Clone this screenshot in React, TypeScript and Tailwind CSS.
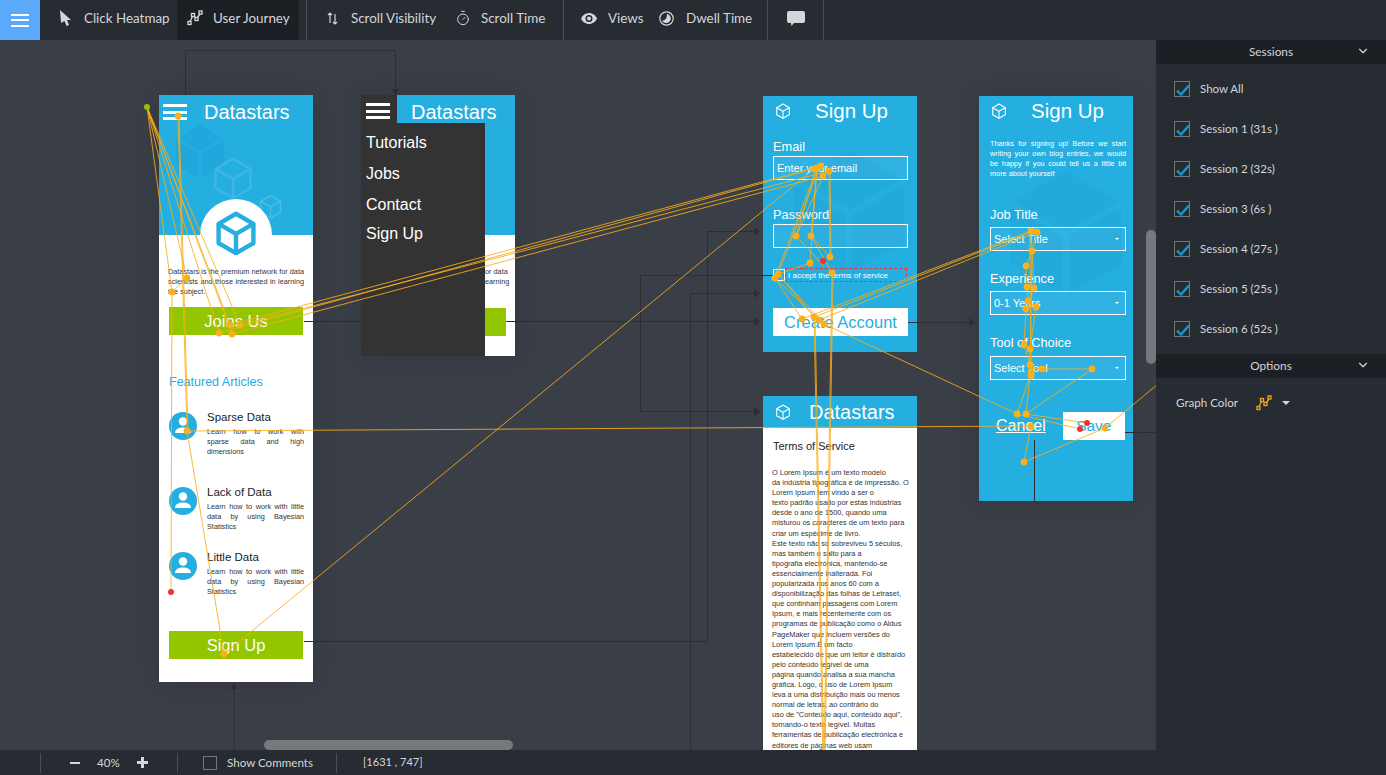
import { ReactNode } from "react";
import { ChevronDown, Timer } from "lucide-react";

const UI_FONT = "font-['Lato','Noto_Sans',sans-serif]";
const MOCK_FONT = "font-['Liberation_Sans',Arial,sans-serif]";

const SESSIONS = [
  "Show All",
  "Session 1 (31s )",
  "Session 2 (32s)",
  "Session 3 (6s )",
  "Session 4 (27s )",
  "Session 5 (25s )",
  "Session 6 (52s )",
];

const ARTICLES = [
  { title: "Sparse Data", body: "Learn how to work with sparse data and high dimensions", h: "h-[75px]" },
  { title: "Lack of Data", body: "Learn how to work with little data by using Bayesian Statistics", h: "h-[65px]" },
  { title: "Little Data", body: "Learn how to work with little data by using Bayesian Statistics", h: "h-[65px]" },
];

const TERMS = [
  "O Lorem Ipsum é um texto modelo",
  "da indústria tipográfica e de impressão. O",
  "Lorem Ipsum tem vindo a ser o",
  "texto padrão usado por estas indústrias",
  "desde o ano de 1500, quando uma",
  "misturou os caracteres de um texto para",
  "criar um espécime de livro.",
  "Este texto não só sobreviveu 5 séculos,",
  "mas também o salto para a",
  "tipografia electrónica, mantendo-se",
  "essencialmente inalterada. Foi",
  "popularizada nos anos 60 com a",
  "disponibilização das folhas de Letraset,",
  "que continham passagens com Lorem",
  "Ipsum, e mais recentemente com os",
  "programas de publicação como o Aldus",
  "PageMaker que incluem versões do",
  "Lorem Ipsum.É um facto",
  "estabelecido de que um leitor é distraído",
  "pelo conteúdo legível de uma",
  "página quando analisa a sua mancha",
  "gráfica. Logo, o uso de Lorem Ipsum",
  "leva a uma distribuição mais ou menos",
  "normal de letras, ao contrário do",
  "uso de \"Conteúdo aqui, conteúdo aqui\",",
  "tornando-o texto legível. Muitas",
  "ferramentas de publicação electrónica e",
  "editores de páginas web usam",
];

// journey polylines, in page coordinates
const JOURNEY: number[][] = [
  [147, 107, 172, 292], [147, 107, 187, 278], [147, 107, 219, 333], [147, 107, 230, 325], [147, 107, 232, 334], [147, 107, 240, 325],
  [187, 278, 172, 292], [172, 292, 171, 592], [178, 116, 187, 431], [179, 116, 188, 431], [187, 431, 224, 654], [187, 431, 1031, 426],
  [219, 333, 817, 168], [230, 325, 821, 166], [232, 334, 823, 176], [240, 325, 829, 171], [224, 654, 814, 169],
  [817, 168, 796, 236], [823, 176, 796, 236], [817, 168, 811, 236], [817, 168, 810, 263], [829, 171, 830, 257], [830, 171, 831, 257],
  [820, 166, 778, 274], [817, 168, 775, 278], [796, 236, 823, 265], [811, 236, 832, 273], [811, 236, 830, 257], [810, 263, 778, 274],
  [775, 278, 802, 319], [778, 274, 814, 317], [775, 278, 819, 320], [778, 274, 824, 324],
  [814, 317, 823, 760], [815, 317, 824, 760], [832, 273, 824, 760], [833, 273, 825, 760],
  [802, 319, 1031, 231], [814, 317, 1031, 232], [819, 320, 1037, 232], [824, 324, 1017, 414],
  [1031, 231, 1032, 251], [1037, 232, 1032, 251], [1032, 251, 1026, 266], [1026, 266, 1027, 287], [1032, 251, 1034, 288],
  [1027, 287, 1028, 301], [1034, 288, 1026, 309], [1028, 301, 1036, 307], [1026, 309, 1024, 345], [1036, 307, 1030, 349],
  [1032, 251, 1030, 372], [1030, 235, 1031, 376], [1024, 345, 1030, 365], [1030, 349, 1031, 372], [1042, 369, 1092, 369], [1031, 368, 1042, 369],
  [1031, 374, 1017, 414], [1092, 369, 1026, 414], [1030, 376, 1026, 414], [1026, 414, 1087, 423], [1017, 414, 1080, 429],
  [1031, 426, 1024, 462], [1024, 462, 1105, 428], [1105, 428, 1158, 384],
];

const DOTS = [
  [178, 116], [187, 278], [172, 292], [219, 333], [232, 334], [230, 325], [240, 325], [187, 431], [224, 654],
  [821, 166], [817, 168], [814, 169], [823, 176], [829, 171], [796, 236], [811, 236], [830, 257], [810, 263], [832, 273], [778, 274], [775, 278],
  [802, 319], [814, 317], [819, 320], [824, 324],
  [1031, 231], [1037, 232], [1032, 251], [1026, 266], [1027, 287], [1034, 288], [1028, 301], [1026, 309], [1036, 307],
  [1024, 345], [1030, 349], [1030, 365], [1042, 369], [1092, 369], [1031, 372], [1031, 376], [1017, 414], [1026, 414], [1031, 426], [1024, 462], [1105, 428],
];

function JourneyIcon({ color = "#d8dadd" }: { color?: string }) {
  return (
    <svg width="16" height="16" viewBox="0 0 16 16" fill="none" stroke={color} strokeWidth="1.3">
      <rect x="1" y="11.5" width="3" height="3" />
      <rect x="4.5" y="3.5" width="3" height="3" />
      <rect x="8" y="7.5" width="3" height="3" />
      <rect x="12" y="1" width="3" height="3" />
      <path d="M3 11.5 5.500 6.500M7 6.500 9 7.500M10.500 7.500 13 4" />
    </svg>
  );
}

function Cube({ size, stroke = "#fff", sw = 1.6, fill = "none", className = "" }: { size: number; stroke?: string; sw?: number; fill?: string; className?: string }) {
  return (
    <svg width={size} height={size} viewBox="0 0 24 24" fill="none" stroke={stroke} strokeWidth={sw} strokeLinejoin="round" className={className}>
      <path d="M12 1.5 21.5 7v10.5L12 23 2.500 17.500V7z" fill={fill} />
      <path d="M2.500 7 12 12.500 21.500 7M12 12.500V23" />
    </svg>
  );
}

function Avatar() {
  return (
    <svg width="28" height="28" viewBox="0 0 28 28" className="shrink-0">
      <circle cx="14" cy="14" r="14" fill="#25aee0" />
      <circle cx="14" cy="9.5" r="4.2" fill="#fff" />
      <path d="M6 21c0-4 4-5.600 8-5.600s8 1.600 8 5.600z" fill="#fff" />
    </svg>
  );
}

function Burger({ className = "" }: { className?: string }) {
  return (
    <div className={`flex flex-col justify-between w-6 h-[16px] ${className}`}>
      <div className="h-[3px] bg-white" />
      <div className="h-[3px] bg-white" />
      <div className="h-[3px] bg-white" />
    </div>
  );
}

function ToolItem({ icon, label, w, gap, pl, active }: { icon: ReactNode; label: string; w: string; gap: string; pl: string; active?: boolean }) {
  return (
    <div className={`flex items-center h-10 pb-[4px] text-[13.4px] text-[#d4d6d9] ${w} ${gap} ${pl} ${active ? "bg-[#1c2025]" : ""}`}>
      {icon}
      <span className="whitespace-nowrap">{label}</span>
    </div>
  );
}

function Field({ label, value, select, gap = "mt-[2px]", className = "" }: { label: string; value?: string; select?: boolean; gap?: string; className?: string }) {
  return (
    <div className={className}>
      <div className="text-[12.800px] leading-[14px] text-white">{label}</div>
      <div className={`flex items-center justify-between h-[24px] border border-white bg-white/5 px-[3px] text-[11px] text-white ${gap}`}>
        <span>{value}</span>
        {select && <span className="mr-[3px] border-x-[2px] border-t-[2px] border-x-transparent border-t-white" />}
      </div>
    </div>
  );
}

function Connectors() {
  const stroke = "#2c2e32";
  const arrows = [
    [760, 231], [760, 293], [760, 321], [760, 411], [975, 322],
  ];
  return (
    <svg className="absolute left-0 top-0 w-[1156px] h-[710px]" viewBox="0 40 1156 710" fill="none" stroke={stroke}>
      <path d="M185.500 95V50.500H395.500V92" />
      <path d="M304 321.500H760M908 322.500H975" />
      <path d="M304 641.500H707.500V231.500H760" />
      <path d="M763 275.500H640.500V411.500H760" />
      <path d="M690.500 750V293.500H760" />
      <path d="M234 750V688" />
      <path d="M1125 432.500H1156" />
      {arrows.map(([x, y]) => (
        <path key={`${x}-${y}`} d={`M${x - 6} ${y - 4}L${x} ${y + 0.5}L${x - 6} ${y + 5}z`} fill={stroke} stroke="none" />
      ))}
      <path d="M392 89h7l-3.500 6z" fill={stroke} stroke="none" />
      <path d="M231 689l3-6 3 6z" fill={stroke} stroke="none" />
    </svg>
  );
}

function JourneyOverlay() {
  return (
    <svg className="absolute left-0 top-0 w-[1156px] h-[710px] pointer-events-none" viewBox="0 40 1156 710">
      {/* connector stubs that sit on top of the screens */}
      <path d="M304 321.500H313M506 321.500H515M304 641.500H313M908 322.500H917M763 275.500H773M1125 432.500H1133M1034.500 440V501" fill="none" stroke="#2c2e32" />
      {JOURNEY.map(([a, b, c, d], i) => (
        <line key={i} x1={a} y1={b} x2={c} y2={d} stroke="#f9ae19" strokeWidth="1" strokeOpacity="0.85" />
      ))}
      {DOTS.map(([x, y], i) => (
        <circle key={i} cx={x} cy={y} r="3.400" fill="#fbb01a" />
      ))}
      <circle cx="147" cy="107" r="3" fill="#8fc400" />
      <circle cx="171" cy="592" r="3" fill="#f0303a" />
      <circle cx="823" cy="261" r="3" fill="#f0303a" />
      <circle cx="1087" cy="423" r="3" fill="#f0303a" />
      <circle cx="1080" cy="429" r="3" fill="#f0303a" />
    </svg>
  );
}

function HomeScreen() {
  return (
    <div className={`absolute left-[159px] top-[55px] w-[154px] h-[587px] bg-white shadow-[0_0_24px_rgba(0,0,0,0.12)] ${MOCK_FONT}`}>
      <div className="relative h-[140px] bg-[#25aee0] overflow-hidden">
        <div className="flex items-center h-[34px] pl-[4px]">
          <Burger />
          <span className="ml-[17px] text-[20px] text-white">Datastars</span>
        </div>
        <Cube size={64} stroke="#25aee0" sw={1.2} fill="#20a7db" className="absolute left-[9px] top-[24px]" />
        <Cube size={44} stroke="#3db6e3" sw={1.5} className="absolute left-[52px] top-[61px]" />
        <Cube size={25} stroke="#49bce6" sw={1.5} className="absolute left-[99px] top-[99px]" />
        <div className="absolute left-[41px] top-[104px] w-[72px] h-[72px] rounded-full bg-white" />
      </div>
      <Cube size={44} stroke="#25aee0" sw={2.4} className="absolute left-[55px] top-[116px]" />
      <p className="mx-[9px] mt-[32px] text-[7.300px] leading-[10px] text-justify text-[#333]">
        Datastars is the premium network for data scientists and those interested in learning the subject.
      </p>
      <div className="mx-[10px] mt-[10px] h-[28px] flex items-center justify-center bg-[#94c600] text-[16.500px] text-white">Joins Us</div>
      <div className="ml-[10px] mt-[40px] text-[12.500px] leading-[15px] text-[#25aee0]">Featured Articles</div>
      <div className="mt-[20px] ml-[10px] mr-[9px]">
        {ARTICLES.map((a) => (
          <div key={a.title} className={`flex gap-[10px] ${a.h}`}>
            <div className="pt-[2px]"><Avatar /></div>
            <div className="flex-1">
              <div className="text-[11.500px] leading-[14px] text-[#222]">{a.title}</div>
              <p className="mt-[3px] text-[7.300px] leading-[10px] text-justify text-[#333]">{a.body}</p>
            </div>
          </div>
        ))}
      </div>
      <div className="mx-[10px] mt-[16px] h-[28px] flex items-center justify-center bg-[#94c600] text-[16.500px] text-white">Sign Up</div>
    </div>
  );
}

function MenuScreen() {
  return (
    <div className={`absolute left-[361px] top-[55px] w-[154px] h-[261px] bg-white shadow-[0_0_24px_rgba(0,0,0,0.12)] ${MOCK_FONT}`}>
      <div className="h-[140px] bg-[#25aee0] pl-[50px] pt-[3px] text-[20px] leading-[28px] text-white">Datastars</div>
      <p className="absolute left-[124px] top-[172px] text-[7.300px] leading-[10px] text-[#333] whitespace-nowrap">or data<br />earning</p>
      <div className="absolute left-[124px] top-[213px] w-[21px] h-[28px] bg-[#94c600]" />
      <div className="absolute left-0 top-0 w-[36px] h-[28px] bg-[#333]" />
      <div className="absolute left-0 top-[28px] bottom-0 w-[124px] bg-[#333] pl-[5px] pt-[9px] text-[16px] text-white">
        <div className="leading-[22px] mb-[9px]">Tutorials</div>
        <div className="leading-[22px] mb-[9px]">Jobs</div>
        <div className="leading-[22px] mb-[7px]">Contact</div>
        <div className="leading-[22px]">Sign Up</div>
      </div>
      <Burger className="absolute left-[5px] top-[8px]" />
    </div>
  );
}

function SignUpScreen() {
  return (
    <div className={`absolute left-[763px] top-[56px] w-[154px] h-[256px] bg-[#25aee0] overflow-hidden ${MOCK_FONT}`}>
      <Cube size={148} stroke="#25aee0" sw={1.1} fill="#22aadd" className="absolute left-[12px] top-[40px]" />
      <div className="relative">
        <div className="flex items-center h-[30px] pl-[12px]">
          <Cube size={16} />
          <span className="ml-[24px] text-[20.500px] text-white">Sign Up</span>
        </div>
        <div className="ml-[10px] mr-[9px]">
          <Field label="Email" value="Enter your email" className="mt-[14px]" />
          <Field label="Password" className="mt-[28px]" />
          <div className="mt-[20px] flex items-center h-[14px]">
            <div className="w-[12px] h-[12px] border border-white" />
            <div className="flex-1 h-[14px] mr-[1px] border border-dashed border-[#ef3340] pl-[2px] pt-[1px] text-[8px] leading-[12px] text-white whitespace-nowrap">I accept the terms of service</div>
          </div>
          <div className="mt-[26px] h-[28px] flex items-center justify-center bg-white text-[16.500px] text-[#25aee0]">Create Account</div>
        </div>
      </div>
    </div>
  );
}

function DetailsScreen() {
  return (
    <div className={`absolute left-[979px] top-[56px] w-[154px] h-[405px] bg-[#25aee0] overflow-hidden shadow-[0_0_24px_rgba(0,0,0,0.15)] ${MOCK_FONT}`}>
      <Cube size={148} stroke="#25aee0" sw={1.1} fill="#22aadd" className="absolute left-[13px] top-[62px]" />
      <div className="relative">
        <div className="flex items-center h-[30px] pl-[12px]">
          <Cube size={16} />
          <span className="ml-[24px] text-[20.500px] text-white">Sign Up</span>
        </div>
        <p className="ml-[11px] mt-[13px] w-[136px] text-[7.300px] leading-[10px] text-justify text-white">
          Thanks for signing up! Before we start writing your own blog entries, we would be happy if you could tell us a little bit more about yourself
        </p>
        <div className="ml-[11px] w-[136px]">
          <Field label="Job Title" value="Select Title" select gap="mt-[5px]" className="mt-[29px]" />
          <Field label="Experience" value="0-1 Years" select gap="mt-[5px]" className="mt-[21px]" />
          <Field label="Tool of Choice" value="Select Tool" select gap="mt-[6px]" className="mt-[21px]" />
        </div>
        <div className="flex items-center mt-[32px] ml-[17px]">
          <span className="text-[16px] text-white underline">Cancel</span>
          <div className="ml-[17px] w-[62px] h-[28px] flex items-center justify-center bg-white text-[15.500px] text-[#25aee0]">Save</div>
        </div>
      </div>
    </div>
  );
}

function TermsScreen() {
  return (
    <div className={`absolute left-[763px] top-[356px] w-[154px] h-[354px] bg-white overflow-hidden ${MOCK_FONT}`}>
      <div className="flex items-center h-[32px] pl-[12px] bg-[#25aee0]">
        <Cube size={16} />
        <span className="ml-[18px] text-[20px] text-white">Datastars</span>
      </div>
      <div className="ml-[10px] mt-[11px] text-[11px] leading-[14px] text-[#222]">Terms of Service</div>
      <div className="ml-[9px] mt-[15px] text-[7.400px] leading-[10.100px] text-[#333] whitespace-nowrap">
        {TERMS.map((t) => (
          <div key={t}>{t}</div>
        ))}
      </div>
    </div>
  );
}

function SideHeader({ label }: { label: string }) {
  return (
    <div className="relative flex items-center justify-center h-6 bg-[#1c2025] text-[11.800px] text-[#d4d6d9]">
      {label}
      <ChevronDown size={14} className="absolute right-[16px] top-[4px]" />
    </div>
  );
}

function CheckRow({ label }: { label: string }) {
  return (
    <div className="flex items-center h-10 pl-[18px]">
      <div className="relative w-4 h-4 border border-[#74787c]">
        <svg width="16" height="16" viewBox="0 0 16 16" className="absolute left-0 top-0" fill="none" stroke="#0e9bd1" strokeWidth="2.400">
          <path d="M2 8.500 6 12.500 14 3.500" />
        </svg>
      </div>
      <span className="ml-[10px] text-[11.500px] text-[#d4d6d9]">{label}</span>
    </div>
  );
}

export default function App() {
  return (
    <div className={`flex flex-col w-[1386px] h-[775px] overflow-hidden bg-[#272b32] ${UI_FONT}`}>
      <header className="flex h-10 shrink-0 bg-[#272b32]">
        <div className="flex items-center justify-center w-10 bg-[#5aa9fb]">
          <div className="flex flex-col justify-between w-[18px] h-[13px]">
            <div className="h-[2px] bg-white" />
            <div className="h-[2px] bg-white" />
            <div className="h-[2px] bg-white" />
          </div>
        </div>
        <ToolItem
          label="Click Heatmap"
          w="w-[137px]"
          pl="pl-[20px]"
          gap="gap-[13px]"
          icon={
            <svg width="11" height="16" viewBox="0 0 11 16" fill="#d4d6d9">
              <path d="M0 0 11 10H7l2 5-2.500 1-2-5L1 13z" />
            </svg>
          }
        />
        <ToolItem label="User Journey" w="w-[122px]" pl="pl-[10px]" gap="gap-[10px]" active icon={<JourneyIcon />} />
        <div className="w-[8px] border-r border-[#4a4e55]" />
        <ToolItem
          label="Scroll Visibility"
          w="w-[133px]"
          pl="pl-[20px]"
          gap="gap-[13px]"
          icon={
            <svg width="11" height="13" viewBox="0 0 11 13" fill="none" stroke="#d4d6d9" strokeWidth="1.200">
              <path d="M3 11V1M1 3l2-2 2 2M8 2v10M6 10l2 2 2-2" />
            </svg>
          }
        />
        <ToolItem label="Scroll Time" w="w-[123px]" pl="pl-[15px]" gap="gap-[10px]" icon={<Timer size={16} strokeWidth={1.500} color="#d4d6d9" />} />
        <div className="w-[0px] border-r border-[#4a4e55]" />
        <ToolItem
          label="Views"
          w="w-[81px]"
          pl="pl-[17px]"
          gap="gap-[11px]"
          icon={
            <svg width="16" height="11" viewBox="0 0 16 11">
              <path fillRule="evenodd" fill="#d4d6d9" d="M8 0c3.600 0 6.500 2.300 8 5.500C14.500 8.700 11.600 11 8 11S1.500 8.700 0 5.500C1.500 2.300 4.400 0 8 0zm0 2a3.500 3.500 0 1 0 0 7 3.500 3.500 0 0 0 0-7zm0 1.500a2 2 0 1 1 0 4 2 2 0 0 1 0-4z" />
            </svg>
          }
        />
        <ToolItem
          label="Dwell Time"
          w="w-[122px]"
          pl="pl-[14px]"
          gap="gap-[12px]"
          icon={
            <svg width="15" height="15" viewBox="0 0 15 15">
              <circle cx="7.500" cy="7.500" r="6.700" fill="none" stroke="#d4d6d9" strokeWidth="1.200" />
              <path d="M8 3a4.600 4.600 0 1 1-5 6.500c3 .5 5-2 5-6.500z" fill="#d4d6d9" />
            </svg>
          }
        />
        <div className="w-[1px] bg-[#4a4e55]" />
        <div className="flex items-center justify-center w-[56px] border-r border-[#4a4e55]">
          <svg width="18" height="16" viewBox="0 0 18 16" className="-mt-[3px]">
            <path d="M2 0h14a2 2 0 0 1 2 2v8a2 2 0 0 1-2 2H7l-2.500 3-.5-3H2a2 2 0 0 1-2-2V2a2 2 0 0 1 2-2z" fill="#d4d6d9" />
          </svg>
        </div>
      </header>

      <div className="flex flex-1 min-h-0">
        <div className="flex flex-col w-[1156px]">
          <main className="relative flex-1 min-h-0 bg-[#3a3e46] overflow-hidden">
            <Connectors />
            <HomeScreen />
            <MenuScreen />
            <SignUpScreen />
            <DetailsScreen />
            <TermsScreen />
            <JourneyOverlay />
            <div className="absolute right-0 top-[190px] w-[10px] h-[134px] rounded-t-full rounded-b-full bg-[#75797c]" />
            <div className="absolute left-[264px] bottom-0 w-[249px] h-[10px] rounded-full bg-[#75797c]" />
          </main>
          <footer className="flex items-center h-[25px] shrink-0 bg-[#272b32] text-[11.600px] text-[#d4d6d9]">
            <div className="w-[41px] h-5 border-r border-[#4a4e55]" />
            <div className="flex items-center w-[137px] h-5 border-r border-[#4a4e55]">
              <div className="ml-[29px] w-[10px] h-[2px] bg-[#d4d6d9]" />
              <span className="ml-[17px] w-[40px]">40%</span>
              <span className="relative w-[11px] h-[11px]">
                <span className="absolute left-0 top-[4px] w-[11px] h-[3px] bg-[#d4d6d9]" />
                <span className="absolute left-[4px] top-0 w-[3px] h-[11px] bg-[#d4d6d9]" />
              </span>
            </div>
            <div className="ml-[25px] w-[14px] h-[14px] border border-[#74787c]" />
            <span className="ml-[10px] w-[110px] h-5 leading-5 border-r border-[#4a4e55]">Show Comments</span>
            <span className="ml-[26px] text-[11px]">[1631 , 747]</span>
          </footer>
        </div>

        <aside className="w-[230px] shrink-0 bg-[#272b32]">
          <SideHeader label="Sessions" />
          <div className="py-[5px]">
            {SESSIONS.map((s) => (
              <CheckRow key={s} label={s} />
            ))}
          </div>
          <SideHeader label="Options" />
          <div className="flex items-center h-[50px] pl-[20px] text-[11.600px] text-[#d4d6d9]">
            <span className="w-[80px]">Graph Color</span>
            <JourneyIcon color="#f5a81c" />
            <span className="ml-[10px] border-x-[4px] border-t-[4px] border-x-transparent border-t-[#d4d6d9]" />
          </div>
        </aside>
      </div>
    </div>
  );
}
